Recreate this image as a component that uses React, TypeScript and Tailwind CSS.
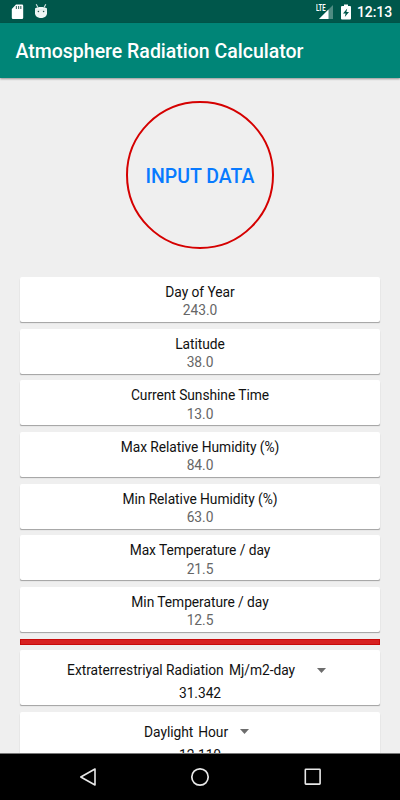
import React from "react";

const inputs = [
  { label: "Day of Year", value: "243.0" },
  { label: "Latitude", value: "38.0" },
  { label: "Current Sunshine Time", value: "13.0" },
  { label: "Max Relative Humidity (%)", value: "84.0" },
  { label: "Min Relative Humidity (%)", value: "63.0" },
  { label: "Max Temperature / day", value: "21.5" },
  { label: "Min Temperature / day", value: "12.5" },
];

function StatusBar() {
  return (
    <div className="flex h-[23px] shrink-0 items-center bg-[#00574b] text-white">
      <svg className="ml-[11px] mt-px h-[16px] w-[14px]" viewBox="0 0 14 16">
        <path d="M5 .6h6a1.2 1.2 0 0 1 1.2 1.2v12a1.2 1.2 0 0 1-1.2 1.2H2A1.2 1.2 0 0 1 .8 13.8V5z" fill="#fff" />
        <path d="M5.4 2v3M7.6 2v3M9.8 2v3" stroke="#4a756e" strokeWidth="1.2" />
      </svg>
      <svg className="ml-[9px] mt-px h-[16px] w-[14px]" viewBox="0 0 14 16">
        <path d="M1 4.5C4 2.5 10 2.5 13 4.5V9.5C12.5 15.5 1.5 15.5 1 9.5z" fill="#eef6f5" />
        <path d="M2.2.3l1.9 3.4M11.800.3l-1.900 3.400" stroke="#c9dcd9" strokeWidth="1.2" />
        <path d="M1 6h12" stroke="#c3d6d3" strokeWidth=".5" />
        <circle cx="4.4" cy="7.5" r=".8" fill="#28584f" />
        <circle cx="9.6" cy="7.5" r=".8" fill="#28584f" />
      </svg>
      <svg className="ml-auto h-[16px] w-[18px]" viewBox="0 0 18 16">
        <path d="M17 1v14H3z" fill="#4f8b82" />
        <path d="M12.5 5.5V15H3z" fill="#fff" />
        <path d="M0 0h10v8H0z" fill="#00574b" />
        <text x="0" y="7.4" fontFamily="Roboto, sans-serif" fontSize="8.6" fontWeight="700" textLength="9.5" lengthAdjust="spacingAndGlyphs" fill="#fff">LTE</text>
      </svg>
      <svg className="ml-[7px] h-[16px] w-[10px]" viewBox="0 0 10 16">
        <path d="M3 .5h4V2h2a1 1 0 0 1 1 1v11.5a1 1 0 0 1-1 1H1a1 1 0 0 1-1-1V3a1 1 0 0 1 1-1h2z" fill="#fff" />
        <path d="M6.2 4.5L2 9.4h2.6L3.8 13 8 8H5.4z" fill="#00574b" />
      </svg>
      <span className="ml-[6px] mr-[8px] w-[35px] whitespace-nowrap pt-[2px] text-[14px] leading-[21px] font-medium tracking-[-0.1px]">12:13</span>
    </div>
  );
}

function Card({ children, className }: { children: React.ReactNode; className: string }) {
  return (
    <div className={"shrink-0 rounded-[2px] bg-white text-center shadow-[0_1.5px_1px_-0.5px_#a0a0a0] " + className}>
      {children}
    </div>
  );
}

function Caret({ className }: { className: string }) {
  return (
    <svg className={"h-[5px] w-[9px] " + className} viewBox="0 0 9 5">
      <path d="M0 0h9L4.5 5z" fill="#6d6d6d" />
    </svg>
  );
}

export default function App() {
  return (
    <div className="flex h-[800px] w-[400px] flex-col overflow-hidden bg-[#efefef] font-['Roboto',sans-serif] text-[13.8px] tracking-[-0.05px] text-[#111]">
      <StatusBar />
      <header className="z-10 flex h-[54.5px] shrink-0 items-center bg-[#008577] pt-[3px] pl-[15.5px] shadow-[0_1px_2px_#00000066]">
        <h1 className="whitespace-nowrap text-[19.5px] leading-6 font-medium tracking-normal text-white">Atmosphere Radiation Calculator</h1>
      </header>
      <main className="flex min-h-0 flex-1 flex-col overflow-hidden px-[19.6px]">
        <button className="mt-[23.5px] flex size-[148px] shrink-0 items-center justify-center self-center rounded-full border-2 border-[#d50000] pt-[3px] text-[19.5px] font-medium tracking-normal text-[#087aff]">
          INPUT DATA
        </button>
        <div className="mt-[28px] flex shrink-0 flex-col gap-[6.7px]">
          {inputs.map((item) => (
            <Card key={item.label} className="h-[45px] pt-[6px]">
              <div className="h-[18.3px] leading-[18px]">{item.label}</div>
              <div className="leading-[18px] text-[#666]">{item.value}</div>
            </Card>
          ))}
        </div>
        <div className="mt-[6.8px] h-[6px] shrink-0 border border-[#c70b0b] bg-[#d82222]" />
        <Card className="mt-[5px] h-[55px]">
          <div className="flex h-[40.5px] items-center pl-[47.5px]">
            <span>Extraterrestriyal Radiation</span>
            <span className="ml-[5.5px]">Mj/m2-day</span>
            <Caret className="ml-[21.5px]" />
          </div>
          <div className="-mt-[6px] leading-[18px]">31.342</div>
        </Card>
        <Card className="mt-[7px] h-[55px]">
          <div className="flex h-[40px] items-center pl-[124.5px]">
            <span>Daylight</span>
            <span className="ml-[5px]">Hour</span>
            <Caret className="ml-[12px]" />
          </div>
          <div className="-mt-[6px] leading-[18px]">12.110</div>
        </Card>
      </main>
      <nav className="flex h-[47px] shrink-0 items-center border-t border-[#777] bg-black">
        <svg className="ml-[79px] h-[20px] w-[18px]" viewBox="0 0 18 20" fill="none" stroke="#e8e8e8" strokeWidth="1.6" strokeLinejoin="round">
          <path d="M16 2v16L1.8 10z" />
        </svg>
        <svg className="ml-[93px] size-[20px]" viewBox="0 0 20 20" fill="none" stroke="#e8e8e8" strokeWidth="1.7">
          <circle cx="10" cy="10" r="8.2" />
        </svg>
        <svg className="ml-[93px] size-[20px]" viewBox="0 0 20 20" fill="none" stroke="#e8e8e8" strokeWidth="1.6">
          <rect x="2.3" y="2.3" width="14.8" height="14.8" rx=".6" />
        </svg>
      </nav>
    </div>
  );
}
